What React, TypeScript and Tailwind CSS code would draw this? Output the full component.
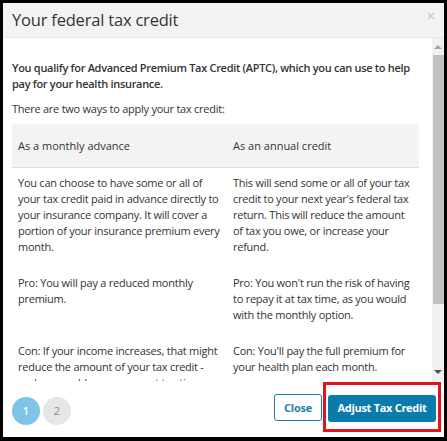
import React from "react";

const font = { fontFamily: '"Open Sans", "Liberation Sans", sans-serif' };

export default function App() {
  return (
    <div className="w-[447px] h-[441px] bg-black pt-[3px] pl-[3px] pr-[3px] pb-[4px]" style={font}>
      <div className="w-full h-full bg-white flex flex-col">
        <div className="h-[35px] shrink-0 bg-[#f3f3f3] border-b border-[#e6e6e6] flex items-center justify-between pl-[9px] pr-[9px]">
          <span className="text-[16.5px] tracking-[-0.2px] text-[#333] leading-none">Your federal tax credit</span>
          <svg width="8" height="8" viewBox="0 0 8 8" className="self-start mt-[9px]">
            <path d="M1 1 L7 7 M7 1 L1 7" stroke="#cfcfcf" strokeWidth="1.6" />
          </svg>
        </div>
        <div className="flex flex-1 min-h-0">
          <div className="flex-1 overflow-hidden pl-[9px] pr-[13px] pt-[22px] text-[#333]">
            <p className="text-[11px] font-semibold tracking-[-0.3px] leading-[16px] pr-[4px]">
              You qualify for Advanced Premium Tax Credit (APTC), which you can use to help pay for your health insurance.
            </p>
            <p className="text-[11px] tracking-[-0.25px] leading-[16px] mt-[9px]">There are two ways to apply your tax credit:</p>
            <div className="mt-[7px] text-[11px] leading-[16px]">
              <div className="grid grid-cols-[215px_192px] bg-[#f3f3f3] border-b border-[#dedede] h-[44px] items-center">
                <div className="pl-[6px]">As a monthly advance</div>
                <div className="pl-[6px]">As an annual credit</div>
              </div>
              <div className="grid grid-cols-[215px_192px] pt-[7px] tracking-[-0.25px]">
                <div className="pl-[6px] pr-[6px]">You can choose to have some or all of your tax credit paid in advance directly to your insurance company. It will cover a portion of your insurance premium every month.</div>
                <div className="pl-[6px] pr-[6px]">This will send some or all of your tax credit to your next year's federal tax return. This will reduce the amount of tax you owe, or increase your refund.</div>
                <div className="pl-[6px] pr-[6px] pt-[20px]">Pro: You will pay a reduced monthly premium.</div>
                <div className="pl-[6px] pr-[6px] pt-[20px]">Pro: You won't run the risk of having to repay it at tax time, as you would with the monthly option.</div>
                <div className="pl-[6px] pr-[6px] pt-[20px]">Con: If your income increases, that might reduce the amount of your tax credit - and you could owe money at tax time.</div>
                <div className="pl-[6px] pr-[6px] pt-[20px]">Con: You'll pay the full premium for your health plan each month.</div>
              </div>
            </div>
          </div>
          <div className="w-[12px] shrink-0 bg-[#f1f1f1] flex flex-col">
            <div className="h-[17px] flex items-center justify-center">
              <svg width="8" height="5" viewBox="0 0 8 5"><path d="M0 5 L4 1 L8 5 Z" fill="#a3a3a3" /></svg>
            </div>
            <div className="ml-[1px] h-[249px] bg-[#c1c1c1]" />
            <div className="flex-1" />
            <div className="h-[17px] flex items-center justify-center">
              <svg width="8" height="5" viewBox="0 0 8 5"><path d="M0 0 L4 4 L8 0 Z" fill="#505050" /></svg>
            </div>
          </div>
        </div>
        <div className="h-[56px] shrink-0 flex items-start justify-between pl-[9px] pr-[8px]">
          <div className="flex gap-[3px] mt-[16px]">
            <div className="w-[28px] h-[28px] rounded-full bg-[#7fc4e8] text-white text-[11px] font-semibold flex items-center justify-center">1</div>
            <div className="w-[28px] h-[28px] rounded-full bg-[#e6e6e6] text-[#8a8a8a] text-[11px] flex items-center justify-center">2</div>
          </div>
          <div className="flex items-center gap-[6px] mt-[13px]">
            <button className="h-[27px] w-[48px] rounded-[3px] border border-[#1f7fab] text-[#1f7fab] text-[11px] tracking-[-0.2px] font-bold bg-white">Close</button>
            <div className="relative">
              <button className="h-[27px] w-[108px] rounded-[3px] bg-[#0a7cac] text-white text-[11px] tracking-[-0.3px] font-bold">Adjust Tax Credit</button>
              <div className="absolute -left-[5px] -right-[5px] -top-[12px] -bottom-[10px] border-[3px] border-[#e0141e] pointer-events-none" />
            </div>
          </div>
        </div>
      </div>
    </div>
  );
}
